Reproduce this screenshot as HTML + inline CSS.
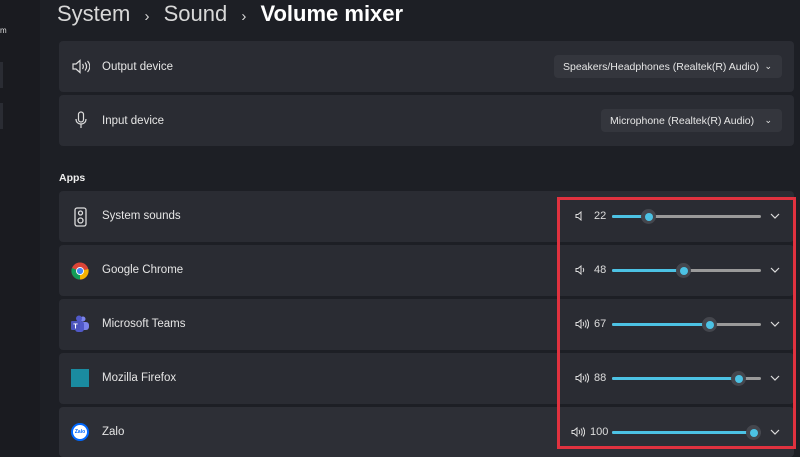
<!DOCTYPE html>
<html><head><meta charset="utf-8"><style>
*{margin:0;padding:0;box-sizing:border-box}
body{width:800px;height:450px;overflow:hidden;background:#1d1f25;font-family:"Liberation Sans",sans-serif;color:#e8e8e8;position:relative}
.side{position:absolute;left:0;top:0;width:40px;height:450px;background:#1a1b20}
.a{position:absolute}
.card{position:absolute;left:59px;width:735px;background:#2a2c33;border-radius:4px}
.lbl{position:absolute;left:102px;font-size:11.5px;color:#e6e6e6}
.dd{position:absolute;background:#34363d;border-radius:4px;font-size:10.5px;color:#e6e6e6;padding:6px 0 0 9px;height:23px;white-space:nowrap}
.tr{position:absolute;left:612px;width:149px;height:3px;background:#9a9a9a;border-radius:2px}
.fl{position:absolute;left:0;top:0;height:3px;background:#4cc2e4;border-radius:2px}
.th{position:absolute;top:-6px;width:15px;height:15px;border-radius:50%;background:#44464d}
.th::after{content:"";position:absolute;left:3.5px;top:3.5px;width:8px;height:8px;border-radius:50%;background:#4cc2e4}
.num{position:absolute;font-size:11px;color:#ddd}
.chev{position:absolute;left:770px;width:10px;height:8px}
</style></head><body>
<div class="side"></div>
<div class="a" style="left:0;top:26px;font-size:8px;color:#ddd">m</div>
<div class="a" style="left:0;top:62px;width:3px;height:26px;background:#2a2c33"></div>
<div class="a" style="left:0;top:103px;width:3px;height:26px;background:#2a2c33"></div>
<div class="a" style="left:57px;top:1px;font-size:22px;color:#d8d8d8;white-space:nowrap">System <span style="font-size:15px;margin:0 8px">›</span> Sound <span style="font-size:15px;margin:0 8px">›</span> <span style="color:#fff;font-weight:bold">Volume mixer</span></div>

<div class="card" style="top:41px;height:51px"></div>
<div class="card" style="top:95px;height:51px"></div>
<svg class="a" style="left:72px;top:59px" width="18" height="15" viewBox="0 0 18 15" fill="none" stroke="#ddd" stroke-width="1.2"><path d="M1 5h3l4-3.5v12L4 10H1z"/><path d="M10.5 5c1 1.5 1 3.5 0 5M13 3.5c2 2.5 2 5.5 0 8M15.5 2c3 3.5 3 7.5 0 11"/></svg>
<div class="lbl" style="top:61px">Output device</div>
<svg class="a" style="left:75px;top:111px" width="12" height="18" viewBox="0 0 12 18" fill="none" stroke="#ddd" stroke-width="1.2"><rect x="3.5" y="1" width="5" height="10" rx="2.5"/><path d="M1 8c0 3 2 5 5 5s5-2 5-5M6 13v4"/></svg>
<div class="lbl" style="top:115px">Input device</div>
<div class="dd" style="left:554px;top:55px;width:228px">Speakers/Headphones (Realtek(R) Audio) <span style="position:absolute;right:10px;font-size:9px">⌄</span></div>
<div class="dd" style="left:601px;top:109px;width:181px">Microphone (Realtek(R) Audio) <span style="position:absolute;right:10px;font-size:9px">⌄</span></div>

<div class="a" style="left:59px;top:172px;font-size:10.5px;font-weight:bold;color:#eee">Apps</div>

<div class="card" style="top:191px;height:51px"></div>
<div class="card" style="top:245px;height:51px"></div>
<div class="card" style="top:299px;height:51px"></div>
<div class="card" style="top:353px;height:51px"></div>
<div class="card" style="top:407px;height:50px;background:#2d2f36"></div>

<svg class="a" style="left:74px;top:207px" width="13" height="20" viewBox="0 0 13 20" fill="none" stroke="#ddd" stroke-width="1.3"><rect x="1" y="1" width="11" height="18" rx="2"/><circle cx="6.5" cy="6" r="2"/><circle cx="6.5" cy="13.5" r="2.5"/></svg>
<div class="lbl" style="top:210px">System sounds</div>

<svg class="a" style="left:71px;top:262px" width="18" height="18" viewBox="0 0 18 18"><circle cx="9" cy="9" r="8.5" fill="#db4437"/><path d="M9 9L1.6 13.3A8.5 8.5 0 0 0 9 17.5z" fill="#0f9d58"/><path d="M9 9L1.6 13.3A8.5 8.5 0 0 1 1 6 L9 9z" fill="#0f9d58"/><path d="M9 9L16.4 13.3A8.5 8.5 0 0 1 9 17.5z" fill="#f4b400"/><path d="M9 9L17.4 7A8.5 8.5 0 0 1 16.4 13.3z" fill="#f4b400"/><circle cx="9" cy="9" r="4" fill="#fff"/><circle cx="9" cy="9" r="3.1" fill="#4285f4"/></svg>
<div class="lbl" style="top:264px">Google Chrome</div>

<svg class="a" style="left:70px;top:315px" width="20" height="18" viewBox="0 0 20 18"><circle cx="13" cy="4" r="2.5" fill="#7b83eb"/><rect x="9" y="7" width="10" height="8" rx="3" fill="#7b83eb"/><circle cx="9" cy="3.5" r="3" fill="#5059c9"/><rect x="5" y="6" width="9" height="11" rx="3" fill="#5059c9"/><rect x="1" y="6" width="9" height="9" rx="1" fill="#4b53bc"/><text x="5.5" y="13.5" font-size="7" font-weight="bold" fill="#fff" text-anchor="middle" font-family="Liberation Sans">T</text></svg>
<div class="lbl" style="top:318px">Microsoft Teams</div>

<div class="a" style="left:71px;top:369px;width:18px;height:18px;background:#1a8ba0"></div>
<div class="lbl" style="top:372px">Mozilla Firefox</div>

<div class="a" style="left:71px;top:423px;width:18px;height:18px;border-radius:50%;background:#fff;border:2px solid #0068ff;font-size:5px;color:#0068ff;text-align:center;line-height:14px;font-weight:bold">Zalo</div>
<div class="lbl" style="top:426px">Zalo</div>

<svg class="a" style="left:575px;top:211px" width="10" height="10" viewBox="0 0 10 10" fill="none" stroke="#ddd" stroke-width="1"><path d="M1 3.5h2l3-2.5v8L3 6.5H1z"/></svg>
<div class="num" style="left:594px;top:210px">22</div>
<div class="tr" style="top:215px"><div class="fl" style="width:36px"></div><div class="th" style="left:29px"></div></div>

<svg class="a" style="left:575px;top:265px" width="12" height="10" viewBox="0 0 12 10" fill="none" stroke="#ddd" stroke-width="1"><path d="M1 3.5h2l3-2.5v8L3 6.5H1z"/><path d="M8 3c.8 1.2.8 2.8 0 4"/></svg>
<div class="num" style="left:594px;top:264px">48</div>
<div class="tr" style="top:269px"><div class="fl" style="width:71px"></div><div class="th" style="left:64px"></div></div>

<svg class="a" style="left:575px;top:319px" width="14" height="10" viewBox="0 0 14 10" fill="none" stroke="#ddd" stroke-width="1"><path d="M1 3.5h2l3-2.5v8L3 6.5H1z"/><path d="M8 3c.8 1.2.8 2.8 0 4M10 1.5c1.6 2 1.6 5 0 7M12 .5c2.2 2.7 2.2 6.3 0 9"/></svg>
<div class="num" style="left:594px;top:318px">67</div>
<div class="tr" style="top:323px"><div class="fl" style="width:97px"></div><div class="th" style="left:90px"></div></div>

<svg class="a" style="left:575px;top:373px" width="14" height="10" viewBox="0 0 14 10" fill="none" stroke="#ddd" stroke-width="1"><path d="M1 3.5h2l3-2.5v8L3 6.5H1z"/><path d="M8 3c.8 1.2.8 2.8 0 4M10 1.5c1.6 2 1.6 5 0 7M12 .5c2.2 2.7 2.2 6.3 0 9"/></svg>
<div class="num" style="left:594px;top:372px">88</div>
<div class="tr" style="top:377px"><div class="fl" style="width:126px"></div><div class="th" style="left:119px"></div></div>

<svg class="a" style="left:571px;top:427px" width="14" height="10" viewBox="0 0 14 10" fill="none" stroke="#ddd" stroke-width="1"><path d="M1 3.5h2l3-2.5v8L3 6.5H1z"/><path d="M8 3c.8 1.2.8 2.8 0 4M10 1.5c1.6 2 1.6 5 0 7M12 .5c2.2 2.7 2.2 6.3 0 9"/></svg>
<div class="num" style="left:590px;top:426px">100</div>
<div class="tr" style="top:431px"><div class="fl" style="width:142px"></div><div class="th" style="left:134px"></div></div>

<svg class="chev" style="top:212px" viewBox="0 0 10 8"><path d="M1 2l4 4 4-4" fill="none" stroke="#ddd" stroke-width="1.2"/></svg>
<svg class="chev" style="top:266px" viewBox="0 0 10 8"><path d="M1 2l4 4 4-4" fill="none" stroke="#ddd" stroke-width="1.2"/></svg>
<svg class="chev" style="top:320px" viewBox="0 0 10 8"><path d="M1 2l4 4 4-4" fill="none" stroke="#ddd" stroke-width="1.2"/></svg>
<svg class="chev" style="top:374px" viewBox="0 0 10 8"><path d="M1 2l4 4 4-4" fill="none" stroke="#ddd" stroke-width="1.2"/></svg>
<svg class="chev" style="top:428px" viewBox="0 0 10 8"><path d="M1 2l4 4 4-4" fill="none" stroke="#ddd" stroke-width="1.2"/></svg>

<div class="a" style="left:557px;top:197px;width:239px;height:252px;border:3px solid #e0323f"></div>
</body></html>
